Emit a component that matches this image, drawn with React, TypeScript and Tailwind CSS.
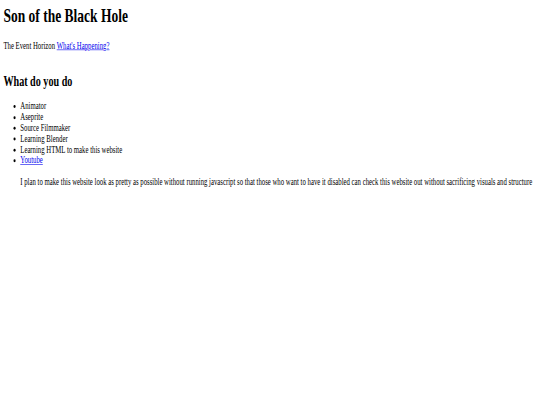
export default function App() {
  return (
    <div className="w-[540px] h-[405px] overflow-hidden bg-white">
      <div
        className="w-[1280px] h-[686px] origin-top-left scale-x-[0.422] scale-y-[0.59] px-2 pt-2 text-black text-[16px] leading-[1.15]"
        style={{ fontFamily: '"Liberation Serif", "Times New Roman", serif' }}
      >
        <h1 className="text-[32px] font-bold leading-[1.15] mb-[24.5px]">Son of the Black Hole</h1>
        <p className="mb-4">
          The Event Horizon{' '}
          <a href="#" className="text-[#0000ee] underline">
            What's Happening?
          </a>
        </p>
        <h2 className="text-[24px] font-bold leading-[1.15] mt-[36px] mb-[20px]">What do you do</h2>
        <ul className="list-disc pl-10">
          <li>Animator</li>
          <li>Aseprite</li>
          <li>Source Filmmaker</li>
          <li>Learning Blender</li>
          <li>Learning HTML to make this website</li>
          <li>
            <a href="#" className="text-[#0000ee] underline">
              Youtube
            </a>
          </li>
          <p className="mt-[18px]">
            I plan to make this website look as pretty as possible without running javascript so that those who want to have it disabled can check this website out without sacrificing visuals and structure
          </p>
        </ul>
      </div>
    </div>
  );
}
